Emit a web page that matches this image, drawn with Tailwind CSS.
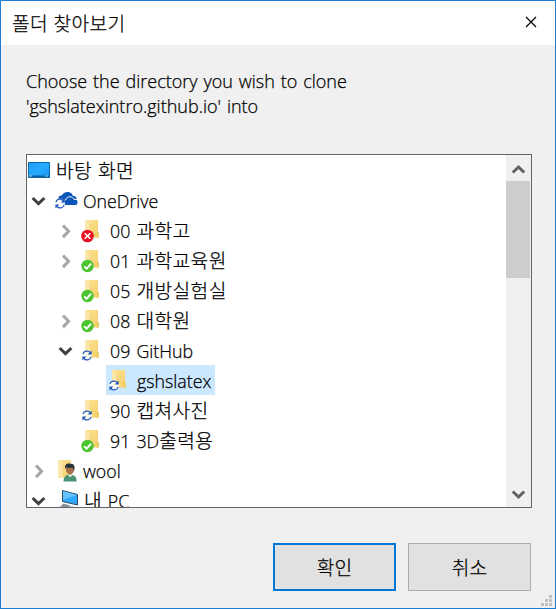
<!DOCTYPE html>
<html lang="ko">
<head>
<meta charset="utf-8">
<title>폴더 찾아보기</title>
<script src="https://cdn.jsdelivr.net/npm/@tailwindcss/browser@4"></script>
</head>
<body class="bg-[#f0f0f0]">
<svg class="absolute h-0 w-0">
  <defs>
    <linearGradient id="gold" x1="0" x2="1" y1="0" y2="1"><stop offset="0" stop-color="#ffe394"/><stop offset="1" stop-color="#f3cd68"/></linearGradient>
    <linearGradient id="blue" x1="0" x2="1" y1="0" y2="1"><stop offset="0" stop-color="#1b9cf5"/><stop offset=".5" stop-color="#27abff"/><stop offset="1" stop-color="#1193ec"/></linearGradient>
    <symbol id="folder" viewBox="0 0 30 30"><path d="M5 5H18V17H19V22.500H8V18L5 20Z" fill="url(#gold)"/><path d="M5 5H6L10 8.500V20L8 23H5Z" fill="#fbe6ac"/><path d="M10 8.500V20" stroke="#f3cf70" stroke-width=".6"/><path d="M16 17h3v5.500h-3z" fill="#f1cd69"/></symbol>
    <symbol id="sync" viewBox="0 0 14 14"><circle cx="6.500" cy="7" r="5.500" fill="#fff" opacity=".8"/><g fill="none" stroke="#1f56b5" stroke-width="1.300"><path d="M2 5.500A4.600 4.600 0 0 1 10 4"/><path d="M11 8.500A4.600 4.600 0 0 1 3 10"/></g><path d="M11.500 1.500V5.800H7.200ZM1.500 12.500V8.200H5.800Z" fill="#1f56b5"/></symbol>
    <symbol id="check" viewBox="0 0 14 14"><circle cx="7" cy="7" r="6.200" fill="#4cc430"/><path d="M3.600 7.300L6.100 9.700L10.700 4.600" fill="none" stroke="#fff" stroke-width="1.800"/></symbol>
    <symbol id="error" viewBox="0 0 14 14"><circle cx="7" cy="7" r="6.300" fill="#e81123"/><path d="M4.200 4.200L9.800 9.800M9.800 4.200L4.200 9.800" stroke="#fff" stroke-width="1.600"/></symbol>
    <symbol id="closed" viewBox="0 0 27 30"><path d="M9 10.500L14.600 16.300L9 22.100" fill="none" stroke="#a6a6a6" stroke-width="3"/></symbol>
    <symbol id="open" viewBox="0 0 27 30"><path d="M5.600 13L11.500 18.600L17.400 13" fill="none" stroke="#404040" stroke-width="3"/></symbol>
  </defs>
</svg>
<div class="flex h-[609px] w-[556px] flex-col overflow-hidden border border-[#1a7fd4] bg-[#f0f0f0] font-['Noto_Sans_CJK_KR',sans-serif] text-[19.2px] font-light text-black [-webkit-text-stroke:0.25px_#000]">
  <header class="flex h-[44px] shrink-0 items-center justify-between bg-white pl-[11px] pr-[18px]">
    <h1 class="text-[19.2px] leading-[44px] tracking-[0.3px]">폴더 찾아보기</h1>
    <svg class="mb-[2px] size-[12px]" viewBox="0 0 12 12"><path d="M1 1L11 11M11 1L1 11" stroke="#000" stroke-width="1.200"/></svg>
  </header>
  <main class="flex flex-1 flex-col pl-[25px] pr-[23px]">
    <p class="mt-[24px] h-[85px] whitespace-nowrap font-['Open_Sans','Noto_Sans_CJK_KR',sans-serif] text-[18px] leading-[25px] [word-spacing:1.2px]">Choose the directory you wish to clone<br>'gshslatexintro.github.io' into</p>
    <div class="flex h-[354px] w-[506px] border border-[#646464] bg-white">
      <ul class="h-full flex-1 overflow-hidden whitespace-nowrap leading-[30px] [&>li]:flex [&>li]:h-[30px] [&_b]:pt-px [&_b]:font-['Open_Sans',sans-serif] [&_b]:text-[17.8px] [&_b]:font-light [&_b]:[word-spacing:1.5px] [&_span]:tracking-[0.4px]">
        <li><svg class="h-[30px] w-[29px]" viewBox="0 0 29 30"><path d="M1.500 7.500h21v15h-21z" fill="url(#blue)" stroke="#0869ad"/><path d="M2 20.500h20v1.500h-20z" fill="#075e9c"/><path d="M2.500 21h2M18 21h1M20 21h1" stroke="#fff"/></svg><span>바탕 화면</span></li>
        <li><svg class="h-[30px] w-[27px]"><use href="#open"/></svg><svg class="h-[30px] w-[29px]" viewBox="1 0 29 30"><path d="M6 15C4 11 8 10 9 10.500C10 7 16 5.500 19 9L20 11C23 10.500 24 13 23.500 14L12 18Z" fill="#0b55b8"/><path d="M12 20C8 20 9 15 12.500 15C14 10.500 20 11 21 14.500C24 13.500 26 16 24.500 19.200Q24 20.500 22 20.500H12Z" fill="#0b55b8" stroke="#fff"/><use href="#sync" x="1" y="12" width="13" height="13"/></svg><b>OneDrive</b></li>
        <li class="pl-[27px]"><svg class="h-[30px] w-[27px]"><use href="#closed"/></svg><svg class="h-[30px] w-[29px]" viewBox="1 0 29 30"><use href="#folder" width="30" height="30"/><use href="#error" x="0.500" y="14" width="14" height="14"/></svg><b>00&nbsp;</b><span>과학고</span></li>
        <li class="pl-[27px]"><svg class="h-[30px] w-[27px]"><use href="#closed"/></svg><svg class="h-[30px] w-[29px]" viewBox="1 0 29 30"><use href="#folder" width="30" height="30"/><use href="#check" x="0.500" y="14" width="14" height="14"/></svg><b>01&nbsp;</b><span>과학교육원</span></li>
        <li class="pl-[54px]"><svg class="h-[30px] w-[29px]" viewBox="1 0 29 30"><use href="#folder" width="30" height="30"/><use href="#check" x="0.500" y="14" width="14" height="14"/></svg><b>05&nbsp;</b><span>개방실험실</span></li>
        <li class="pl-[27px]"><svg class="h-[30px] w-[27px]"><use href="#closed"/></svg><svg class="h-[30px] w-[29px]" viewBox="1 0 29 30"><use href="#folder" width="30" height="30"/><use href="#check" x="0.500" y="14" width="14" height="14"/></svg><b>08&nbsp;</b><span>대학원</span></li>
        <li class="pl-[27px]"><svg class="h-[30px] w-[27px]"><use href="#open"/></svg><svg class="h-[30px] w-[29px]" viewBox="1 0 29 30"><use href="#folder" width="30" height="30"/><use href="#sync" x="1" y="14" width="13" height="13"/></svg><b>09&nbsp;</b><b>GitHub</b></li>
        <li class="pl-[79px]"><div class="flex h-[30px] w-[109px] bg-[#cce8ff]"><svg class="h-[30px] w-[31px]" viewBox="-1 0 31 30"><use href="#folder" width="30" height="30"/><use href="#sync" x="1" y="14" width="13" height="13"/></svg><b>gshslatex</b></div></li>
        <li class="pl-[54px]"><svg class="h-[30px] w-[29px]" viewBox="1 0 29 30"><use href="#folder" width="30" height="30"/><use href="#sync" x="1" y="14" width="13" height="13"/></svg><b>90&nbsp;</b><span>캡쳐사진</span></li>
        <li class="pl-[54px]"><svg class="h-[30px] w-[29px]" viewBox="1 0 29 30"><use href="#folder" width="30" height="30"/><use href="#check" x="0.500" y="14" width="14" height="14"/></svg><b>91&nbsp;</b><b>3D</b><span>출력용</span></li>
        <li><svg class="h-[30px] w-[27px]"><use href="#closed"/></svg><svg class="h-[30px] w-[29px]" viewBox="1 0 29 30"><use href="#folder" width="30" height="30"/><path d="M10.500 26.500C10.500 21 13 20 16.500 19.500C21 20 24 21 23.500 26.500Z" fill="#4a9475"/><path d="M15 19.500l2 3l3-3z" fill="#e8eee8"/><ellipse cx="17" cy="14.500" rx="4" ry="5" fill="#a66e4b"/><path d="M12.300 14C10.800 8 16 8 17.500 8.800C21 8 22.500 12 21 16L19.500 12.500Q15 13.500 13.500 12Z" fill="#29313a"/></svg><b>wool</b></li>
        <li><svg class="h-[30px] w-[27px]"><use href="#open"/></svg><svg class="h-[30px] w-[30px]" viewBox="1 0 30 30"><path d="M2 23L11 19L20 21L25 24L20 28H2Z" fill="#d7dce0"/><path d="M10 18.500L17 20.500L15 23H7Z" fill="#82909c"/><path d="M9.500 5.500L24.500 9.500V20L9.500 16.500Z" fill="#2ca9fb" stroke="#31495d"/><path d="M10 6L24 10L10 15Z" fill="#64c2ff"/></svg><span>내&nbsp;</span><b>PC</b></li>
      </ul>
      <div class="flex w-[25px] flex-col bg-[#f0f0f0]">
        <svg class="h-[26px] w-[25px]" viewBox="0 0 25 26"><path d="M6.800 17.500L12.500 12L18.200 17.500" fill="none" stroke="#606060" stroke-width="3"/></svg>
        <div class="h-[97px] w-[24px] bg-[#cdcdcd]"></div>
        <svg class="mt-auto h-[26px] w-[25px]" viewBox="0 0 25 26"><path d="M6.800 10.500L12.500 16L18.200 10.500" fill="none" stroke="#606060" stroke-width="3"/></svg>
      </div>
    </div>
    <footer class="mt-[35px] flex gap-[12px] pl-[247px] leading-[44px]">
      <button class="h-[48px] w-[123px] border-2 border-[#0078d7] bg-[#e1e1e1]">확인</button>
      <button class="h-[48px] w-[123px] border border-[#adadad] bg-[#e1e1e1]">취소</button>
    </footer>
    <svg class="-mr-[20px] mt-[4px] size-[11px] self-end" viewBox="0 0 11 11"><path d="M8 0h3v3H8zM4 4h3v3H4zM8 4h3v3H8zM0 8h3v3H0zM4 8h3v3H4zM8 8h3v3H8z" fill="#bfbfbf"/></svg>
  </main>
</div>
</body>
</html>
